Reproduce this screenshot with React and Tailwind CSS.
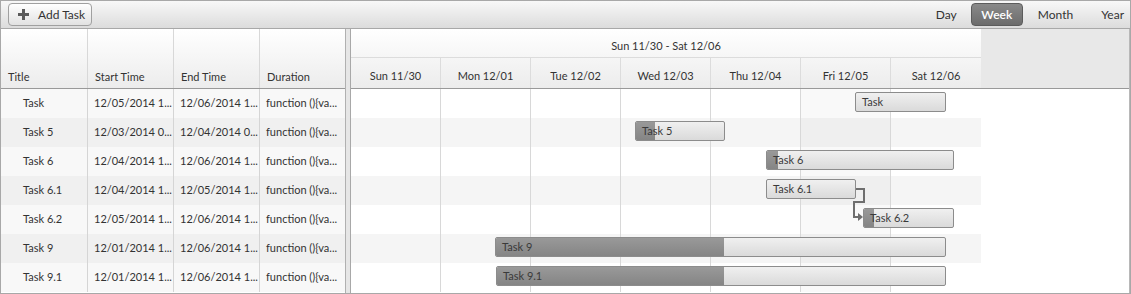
import React from 'react';

const rows = [
  { title: 'Task', start: '12/05/2014 1...', end: '12/06/2014 1...', left: 504, width: 91, progress: 0 },
  { title: 'Task 5', start: '12/03/2014 0...', end: '12/04/2014 0...', left: 284, width: 90, progress: 19 },
  { title: 'Task 6', start: '12/04/2014 1...', end: '12/06/2014 1...', left: 415, width: 188, progress: 11 },
  { title: 'Task 6.1', start: '12/04/2014 1...', end: '12/05/2014 1...', left: 415, width: 90, progress: 0 },
  { title: 'Task 6.2', start: '12/05/2014 1...', end: '12/06/2014 1...', left: 512, width: 91, progress: 10 },
  { title: 'Task 9', start: '12/01/2014 1...', end: '12/06/2014 1...', left: 144, width: 451, progress: 228 },
  { title: 'Task 9.1', start: '12/01/2014 1...', end: '12/06/2014 1...', left: 145, width: 450, progress: 227 },
];

const days = ['Sun 11/30', 'Mon 12/01', 'Tue 12/02', 'Wed 12/03', 'Thu 12/04', 'Fri 12/05', 'Sat 12/06'];

const PlusIcon = () => (
  <svg width="11" height="11" viewBox="0 0 11 11">
    <path d="M4 0h3v4h4v3H7v4H4V7H0V4h4z" fill="#5a5a5a" />
  </svg>
);

const Bar = ({ row }) => (
  <div
    className="absolute top-[3px] h-[20px] border border-[#8c8c8c] rounded-[2px] bg-linear-to-b from-[#f0f0f0] to-[#dadada] overflow-hidden"
    style={{ left: row.left, width: row.width }}
  >
    {row.progress > 0 && (
      <div
        className="absolute inset-y-0 left-0 bg-linear-to-b from-[#999] to-[#858585]"
        style={{ width: row.progress }}
      />
    )}
    <span className="relative block pl-[6px] leading-[18px] text-[#3a3a3a] whitespace-nowrap">{row.title}</span>
  </div>
);

export default function App() {
  return (
    <div className="w-[1131px] h-[294px] border border-[#a8a8a8] flex flex-col overflow-hidden bg-white font-['Lato',sans-serif] text-[11px] text-[#333]">
      {/* toolbar */}
      <div className="h-[28px] shrink-0 border-b border-[#a8a8a8] bg-linear-to-b from-[#f8f8f8] to-[#dcdcdc] flex items-center pl-[7px]">
        <button className="h-[23px] w-[84px] border border-[#a0a0a0] rounded-[4px] bg-linear-to-b from-white to-[#e2e2e2] flex items-center pl-[9px] gap-[9px] text-[12px] text-[#333]">
          <PlusIcon />
          <span>Add Task</span>
        </button>
        <div className="ml-auto flex items-center h-full pr-[6px] text-[12px]">
          <span className="pl-[12px] pr-[14px]">Day</span>
          <span className="w-[52px] h-[23px] flex items-center justify-center rounded-[4px] border border-[#5c5c5c] bg-linear-to-b from-[#8a8a8a] to-[#6c6c6c] text-white font-semibold">Week</span>
          <span className="pl-[15px] pr-[28px]">Month</span>
          <span>Year</span>
        </div>
      </div>

      <div className="flex flex-1 min-h-0">
        {/* task list */}
        <div className="w-[345px] shrink-0 flex flex-col border-r border-[#b0b0b0]">
          <div className="h-[60px] shrink-0 grid grid-cols-[87px_86px_86px_85px] border-b border-[#999] bg-linear-to-b from-white to-[#ececec]">
            {['Title', 'Start Time', 'End Time', 'Duration'].map((h, i) => (
              <div key={h} className={`flex items-end pb-[3px] pl-[7px] ${i < 3 ? 'border-r border-[#d8d8d8]' : ''}`}>
                {h}
              </div>
            ))}
          </div>
          {rows.map((r, i) => (
            <div key={r.title} className={`h-[29px] shrink-0 grid grid-cols-[87px_86px_86px_85px] ${i % 2 ? 'bg-[#f0f0f0]' : 'bg-[#f8f8f8]'}`}>
              <div className="flex items-center pl-[22px] border-r border-[#d5d5d5] pb-[1px]">{r.title}</div>
              <div className="flex items-center pl-[6px] border-r border-[#d5d5d5] whitespace-nowrap overflow-hidden pb-[1px]">{r.start}</div>
              <div className="flex items-center pl-[6px] border-r border-[#d5d5d5] whitespace-nowrap overflow-hidden pb-[1px]">{r.end}</div>
              <div className="flex items-center pl-[6px] whitespace-nowrap overflow-hidden pb-[1px]">function (){'{'}va...</div>
            </div>
          ))}
        </div>

        {/* splitter */}
        <div className="w-[5px] shrink-0 bg-[#e6e6e6] border-r border-[#a8a8a8]" />

        {/* timeline */}
        <div className="flex-1 flex flex-col min-w-0 border-r border-[#b8b8b8]">
          <div className="h-[60px] shrink-0 flex border-b border-[#999]">
            <div className="w-[630px] flex flex-col bg-linear-to-b from-white to-[#ececec]">
              <div className="h-[29px] flex items-center justify-center pt-[6px] border-b border-[#dcdcdc]">Sun 11/30 - Sat 12/06</div>
              <div className="flex-1 grid grid-cols-7">
                {days.map((d, i) => (
                  <div key={d} className={`flex items-center justify-center pt-[7px] ${i < 6 ? 'border-r border-[#dcdcdc]' : ''}`}>{d}</div>
                ))}
              </div>
            </div>
            <div className="flex-1 bg-[#e8e8e8]" />
          </div>

          <div className="relative w-[630px]">
            {rows.map((r, i) => (
              <div key={r.title} className={`relative h-[29px] grid grid-cols-7 ${i % 2 ? 'bg-[#f5f5f5]' : 'bg-white'}`}>
                {days.map((d, j) => (
                  <div key={d} className={`${j < 6 ? 'border-r border-[#d8d8d8]' : ''} ${j === 5 ? 'bg-black/[0.025]' : ''}`} />
                ))}
                <Bar row={r} />
              </div>
            ))}
            <svg className="absolute left-0 top-0 pointer-events-none" width="630" height="203">
              <path d="M505 100H513V113H503V128H508" fill="none" stroke="#6e6e6e" strokeWidth="2" />
              <path d="M507 124L512 128L507 132Z" fill="#6e6e6e" />
            </svg>
          </div>
        </div>
      </div>
    </div>
  );
}
